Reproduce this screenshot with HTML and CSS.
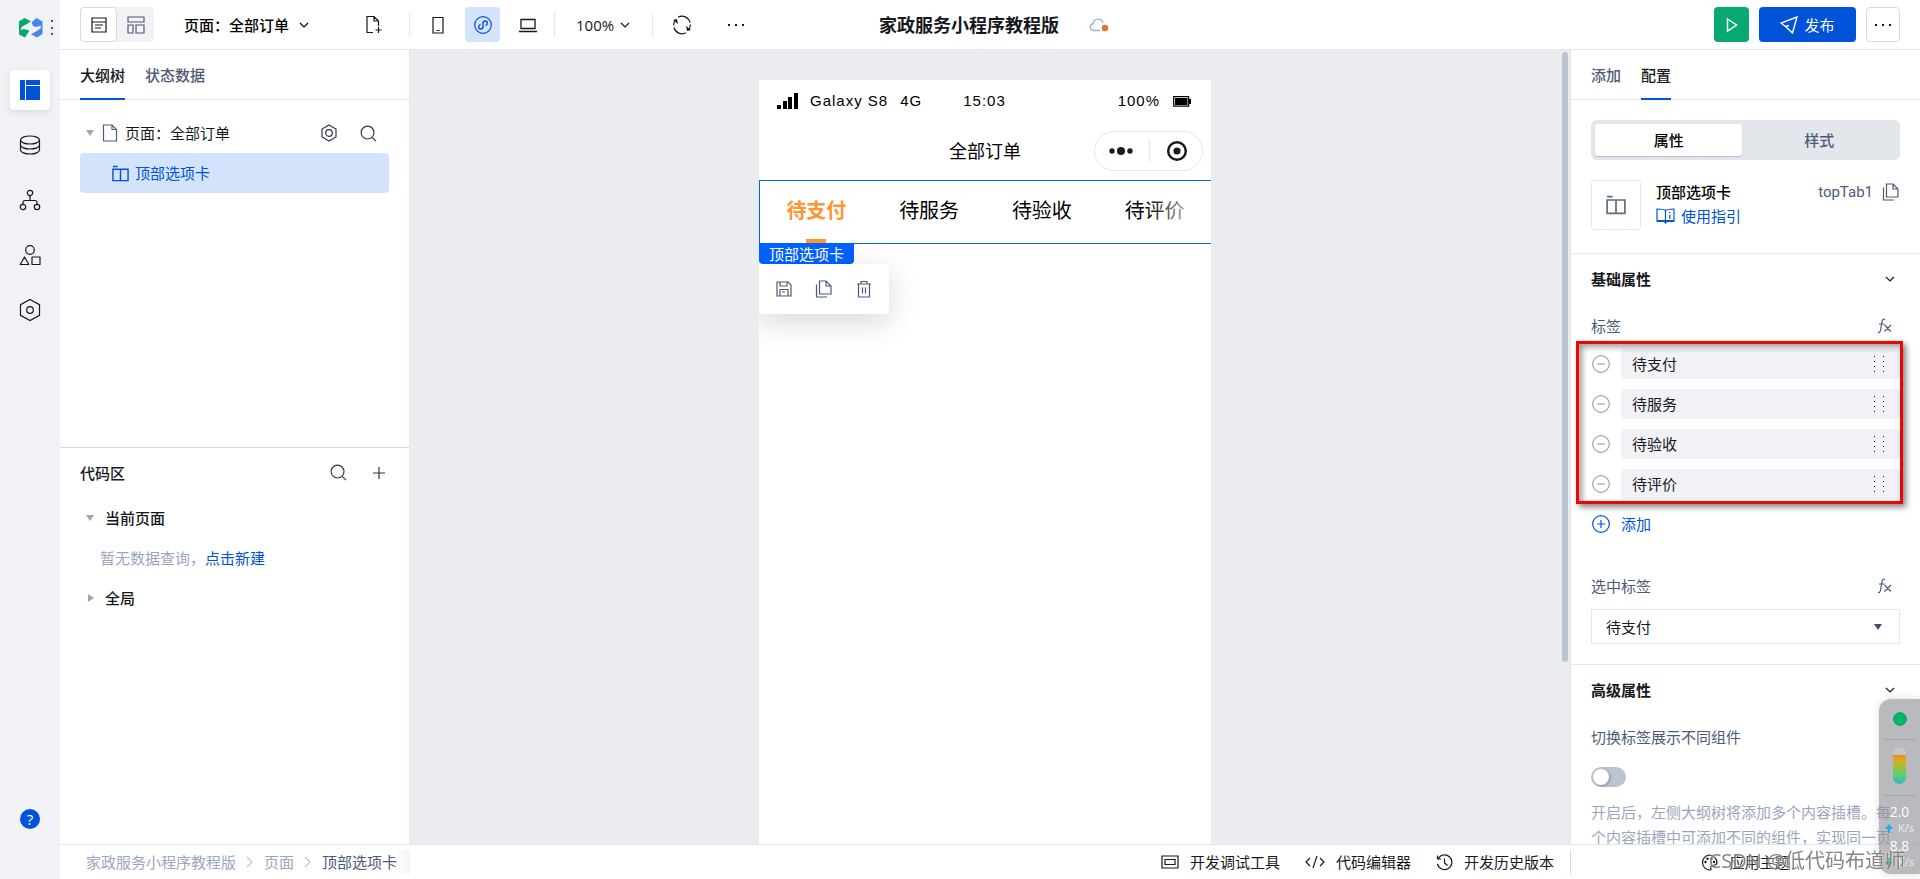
FILE: index.html
```html
<!DOCTYPE html>
<html lang="zh-CN">
<head>
<meta charset="utf-8">
<title>家政服务小程序教程版</title>
<link rel="stylesheet" href="styles.css">
</head>
<body>
<svg class="defs" aria-hidden="true">
  <symbol id="i-chev" viewBox="0 0 10 10"><path d="M1 3l4 4 4-4"/></symbol>
  <symbol id="i-right" viewBox="0 0 8 12"><path d="M1 1l5 5-5 5"/></symbol>
  <symbol id="i-search" viewBox="0 0 18 18"><circle cx="8" cy="8" r="6.8"/><path d="M13 13l4 4"/></symbol>
  <symbol id="i-hex" viewBox="0 0 22 24"><path d="M11 1.500l9.500 5.200v10.600L11 22.500 1.500 17.300V6.700z"/><circle cx="11" cy="12" r="3.300"/></symbol>
  <symbol id="i-hexs" viewBox="0 0 16 18"><path d="M8 1l7 4v8l-7 4-7-4V5z"/><circle cx="8" cy="9" r="3.300"/></symbol>
  <symbol id="i-tab" viewBox="0 0 18 18"><path d="M1 1.500h5M1 4.500h16v12H1zM9 4.500v12" stroke-width="1.500"/></symbol>
  <symbol id="i-copy" viewBox="0 0 18 18"><path d="M4.500 1H11l5 5v8H4.500zM11 1v5h5M1.500 4.500V17H12"/></symbol>
  <symbol id="i-file" viewBox="0 0 16 18"><path d="M1.500 1H10l4.500 4.500V17h-13zM10 1v4.500h4.500"/></symbol>
  <symbol id="i-minus" viewBox="0 0 18 18"><circle cx="9" cy="9" r="8.300"/><path d="M5 9h8"/></symbol>
  <symbol id="i-drag" viewBox="0 0 12 18"><path d="M1 1.500h1M1 6.500h1M1 11.500h1M1 16.500h1M10 1.500h1M10 6.500h1M10 11.500h1M10 16.500h1"/></symbol>
  <symbol id="i-fx" viewBox="0 0 16 16"><path d="M8 1.500C6 .5 5.300 2 5 4L3.500 12c-.4 2-1 3-2.500 2.500M2 6h5.500M7.500 7l6.500 6.500M14 7l-6.500 6.500"/></symbol>
  <symbol id="i-dots" viewBox="0 0 18 4"><path d="M1 1h2v2H1zM8 1h2v2H8zM15 1h2v2h-2z" fill="currentColor" stroke="none"/></symbol>
</svg>

<nav class="rail" aria-label="主导航">
  <div class="brand">
    <svg width="24" height="20" viewBox="0 0 24 20"><path d="M0 3.200L5.500 0l6.500 3.200L8 6 3 8.500 1.500 12 5 11l5.500 1.500L6 19.500 0 16.500z" fill="#07a868" stroke="none"/><path d="M12.500 4.500L17.500 0l6 3.500V16L18 19.500l-6-3.300 4-2.200 5.500-3.500.5-3L17 9l-3-1z" fill="#4a86f0" stroke="none"/></svg>
    <svg width="4" height="18" viewBox="0 0 4 18"><path d="M1 1h2v2H1zM1 8h2v2H1zM1 14h2v2H1z" fill="#4b5b76" stroke="none"/></svg>
  </div>
  <button class="rail-btn active" aria-label="页面"><svg width="20" height="20" viewBox="0 0 20 20"><path d="M0 0h5v20H0zM6 0h14v5H6zM6 6h14v14H6z" fill="#0052d9" stroke="none"/></svg></button>
  <button class="rail-btn" aria-label="数据"><svg width="22" height="20" viewBox="0 0 22 20"><ellipse cx="11" cy="5" rx="9.500" ry="4"/><path d="M1.500 5v10c0 2.200 4.200 4 9.500 4s9.500-1.800 9.500-4V5M1.500 10c0 2.200 4.200 4 9.500 4s9.500-1.800 9.500-4"/></svg></button>
  <button class="rail-btn" aria-label="流程"><svg width="22" height="22" viewBox="0 0 22 22"><circle cx="11" cy="4" r="2.700"/><circle cx="4" cy="18" r="2.700"/><circle cx="18" cy="18" r="2.700"/><path d="M11 7v4.500M4 15v-1.500q0-2 2-2h10q2 0 2 2V15"/></svg></button>
  <button class="rail-btn" aria-label="组件"><svg width="22" height="22" viewBox="0 0 22 22"><circle cx="11" cy="6" r="4.300"/><path d="M5.500 13L9.800 20.500H1.200zM13 13h8v7.500h-8z" stroke-linejoin="round"/></svg></button>
  <button class="rail-btn" aria-label="设置"><svg width="22" height="24"><use href="#i-hex"/></svg></button>
  <button class="rail-btn help" aria-label="帮助"><span class="help-dot">?</span></button>
</nav>

<div class="app">
  <header class="topbar">
    <div class="top-left">
      <div class="mode">
        <button class="mode-btn on" aria-label="单栏"><svg width="16" height="16" viewBox="0 0 16 16"><path d="M1 1h14v14H1zM1 5h14M4 8h8M4 11h6"/></svg></button>
        <button class="mode-btn" aria-label="分栏"><svg width="18" height="18" viewBox="0 0 18 18"><path d="M1 1h16v5H1zM1 9h5v8H1zM9 9h8v8H9z"/></svg></button>
      </div>
      <button class="page-pick"><span>页面：全部订单</span><svg width="10" height="10"><use href="#i-chev"/></svg></button>
      <button class="sq new" aria-label="新建页面"><svg width="18" height="20" viewBox="0 0 18 20"><path d="M8 17.500H2v-16h7l4.500 4.500v5M9 1.500V6h4.500M13.500 12v6M10.500 15h6"/></svg></button>
      <i class="sep"></i>
      <div class="devices">
        <button class="sq" aria-label="手机"><svg width="14" height="18" viewBox="0 0 14 18"><path d="M2 1.500h10v15.500H2zM5.500 14.500h3"/></svg></button>
        <button class="sq on" aria-label="小程序"><svg width="18" height="18" viewBox="0 0 18 18"><circle cx="9" cy="9" r="8.300"/><path d="M6.500 8.300C4 9 4 13 6.800 13 8.500 13 9 12 9 10.800V7.200C9 6 9.800 5 11.200 5c2.800 0 2.800 4 .3 4.700" stroke-width="1.400"/></svg></button>
        <button class="sq" aria-label="电脑"><svg width="18" height="18" viewBox="0 0 18 18"><path d="M2 3.500h14v9H2zM0 15.500h18" stroke-width="1.300"/></svg></button>
      </div>
      <i class="sep"></i>
      <button class="zoom"><span>100%</span><svg width="10" height="10"><use href="#i-chev"/></svg></button>
      <i class="sep"></i>
      <button class="sq refresh" aria-label="刷新"><svg width="20" height="20" viewBox="0 0 20 20"><path d="M6 2.200A8.300 8.300 0 0 1 18 7.500M18.300 9.500a8.300 8.300 0 0 1-1.500 5M14 17.800A8.300 8.300 0 0 1 2 12.500M1.700 10.500a8.300 8.300 0 0 1 1.500-5"/><path d="M1 5l4-1 1 5zM19 15l-4 1-1-5z" fill="currentColor" stroke="none"/></svg></button>
      <button class="sq" aria-label="更多"><svg width="18" height="4"><use href="#i-dots"/></svg></button>
    </div>
    <div class="app-name">
      <h1>家政服务小程序教程版</h1>
      <svg class="cloud" width="20" height="16" viewBox="0 0 20 16"><path d="M11 13.500H4.500C.5 13 0 7.500 4 6.700 5 1 12.500.5 14 5.800"/><circle cx="16" cy="11" r="3.200" fill="#ed6c2c" stroke="none"/></svg>
    </div>
    <div class="top-right">
      <button class="run" aria-label="运行"><svg width="12" height="16" viewBox="0 0 12 16"><path d="M1.500 2l9 6-9 6z" stroke-width="1.500"/></svg></button>
      <button class="publish"><svg width="18" height="18" viewBox="0 0 18 18"><path d="M17 1L1 7l4.500 3.500L12.500 17zM5.500 10.500L9 9.500" stroke-width="1.400"/></svg><span>发布</span></button>
      <button class="more" aria-label="更多"><svg width="18" height="4"><use href="#i-dots"/></svg></button>
    </div>
  </header>

  <div class="work">
    <aside class="left">
      <section class="half">
        <div class="tabs"><button class="tab on">大纲树</button><button class="tab">状态数据</button></div>
        <div class="tree">
          <div class="node">
            <i class="caret"></i><svg class="slate" width="16" height="18"><use href="#i-file"/></svg><span class="grow">页面：全部订单</span>
            <button class="bare" aria-label="设置"><svg width="16" height="18"><use href="#i-hexs"/></svg></button>
            <button class="bare" aria-label="搜索"><svg width="17" height="17"><use href="#i-search"/></svg></button>
          </div>
          <div class="node child"><svg width="17" height="17"><use href="#i-tab"/></svg><span>顶部选项卡</span></div>
        </div>
      </section>
      <section class="half code">
        <div class="code-head"><h2>代码区</h2>
          <button class="bare" aria-label="搜索"><svg width="17" height="17"><use href="#i-search"/></svg></button>
          <button class="bare" aria-label="新增"><svg width="12" height="12" viewBox="0 0 12 12"><path d="M6 0v12M0 6h12"/></svg></button>
        </div>
        <div class="group"><i class="caret"></i><b>当前页面</b></div>
        <p class="empty">暂无数据查询，<a href="#">点击新建</a></p>
        <div class="group"><i class="caret side"></i><b>全局</b></div>
      </section>
    </aside>

    <main class="canvas">
      <div class="phone">
        <div class="status">
          <svg width="22" height="16" viewBox="0 0 22 16"><path d="M0 12h4v4H0zM6 8h4v8H6zM11 4h4v12h-4zM17 0h4v16h-4z" fill="#000" stroke="none"/></svg>
          <span class="carrier">Galaxy S8</span><span class="net">4G</span><span class="clock">15:03</span><span>100%</span>
          <svg class="battery" width="18" height="11" viewBox="0 0 18 11"><path d="M.7.7h15v9.500H.7z"/><path d="M2 2h12.500v7H2zM16 3h2v5h-2z" fill="#000" stroke="none"/></svg>
        </div>
        <div class="navbar">
          <span class="nav-title">全部订单</span>
          <div class="capsule">
            <svg width="24" height="10" viewBox="0 0 24 10"><g fill="#1b1b1b" stroke="none"><circle cx="3" cy="5" r="2.700"/><circle cx="12" cy="5" r="4"/><circle cx="21" cy="5" r="2.700"/></g></svg>
            <i></i>
            <svg width="22" height="22" viewBox="0 0 22 22"><circle cx="11" cy="11" r="8.800" stroke-width="2.500"/><circle cx="11" cy="11" r="3.600" fill="#1b1b1b" stroke="none"/></svg>
          </div>
        </div>
        <div class="top-tabs">
          <div class="ttab on">待支付</div><div class="ttab">待服务</div><div class="ttab">待验收</div><div class="ttab">待评价</div>
        </div>
        <div class="sel-tag">顶部选项卡</div>
        <div class="sel-tools">
          <button aria-label="保存"><svg width="16" height="16" viewBox="0 0 16 16"><path d="M1 1h11l3 3v11H1zM4 1v4h7V1M4 15V8.500h8V15M6 11h3"/></svg></button>
          <button aria-label="复制"><svg width="18" height="18"><use href="#i-copy"/></svg></button>
          <button aria-label="删除"><svg width="16" height="18" viewBox="0 0 16 18"><path d="M1 4h14M5 4V1.500h6V4M2.500 4v13h11V4M6.500 7.500v6M9.500 7.500v6"/></svg></button>
        </div>
      </div>
      <div class="scroll"><i></i></div>
    </main>

    <aside class="right">
      <div class="tabs"><button class="tab">添加</button><button class="tab on">配置</button></div>
      <div class="intro">
        <div class="segment"><button class="on">属性</button><button>样式</button></div>
        <div class="comp">
          <div class="comp-icon"><svg width="20" height="20"><use href="#i-tab"/></svg></div>
          <div class="comp-text"><b>顶部选项卡</b>
            <a href="#"><svg width="19" height="16" viewBox="0 0 19 16"><path d="M9.500 2.500C8 1 6 1 1 1v12h8.500M9.500 2.500C11 1 13 1 18 1v12H9.500zM13.800 4v1.500M13.800 7v4"/><path d="M1 12h17v2h-7l-1.500 2L8 14H1z" fill="currentColor" stroke="none"/></svg>使用指引</a></div>
          <div class="comp-id">topTab1 <button class="bare" aria-label="复制"><svg width="18" height="18"><use href="#i-copy"/></svg></button></div>
        </div>
      </div>
      <section class="sec">
        <h3>基础属性<svg width="10" height="10"><use href="#i-chev"/></svg></h3>
        <div class="field"><span>标签</span><svg width="16" height="16"><use href="#i-fx"/></svg></div>
        <ul class="items">
          <li><button class="bare" aria-label="移除"><svg width="18" height="18"><use href="#i-minus"/></svg></button><div class="pill">待支付<svg width="12" height="18"><use href="#i-drag"/></svg></div></li>
          <li><button class="bare" aria-label="移除"><svg width="18" height="18"><use href="#i-minus"/></svg></button><div class="pill">待服务<svg width="12" height="18"><use href="#i-drag"/></svg></div></li>
          <li><button class="bare" aria-label="移除"><svg width="18" height="18"><use href="#i-minus"/></svg></button><div class="pill">待验收<svg width="12" height="18"><use href="#i-drag"/></svg></div></li>
          <li><button class="bare" aria-label="移除"><svg width="18" height="18"><use href="#i-minus"/></svg></button><div class="pill">待评价<svg width="12" height="18"><use href="#i-drag"/></svg></div></li>
        </ul>
        <button class="add"><svg width="18" height="18" viewBox="0 0 18 18"><circle cx="9" cy="9" r="8.300"/><path d="M5 9h8M9 5v8"/></svg>添加</button>
        <div class="field"><label for="sel">选中标签</label><svg width="16" height="16"><use href="#i-fx"/></svg></div>
        <div class="select"><select id="sel"><option>待支付</option><option>待服务</option><option>待验收</option><option>待评价</option></select><i class="caret dark"></i></div>
      </section>
      <section class="sec">
        <h3>高级属性<svg width="10" height="10"><use href="#i-chev"/></svg></h3>
        <div class="field"><label for="sw">切换标签展示不同组件</label></div>
        <input class="switch" type="checkbox" id="sw">
        <p class="tip">开启后，左侧大纲树将添加多个内容插槽。每个内容插槽中可添加不同的组件，实现同一页</p>
      </section>
    </aside>
  </div>

  <footer class="bottom">
    <nav class="crumbs" aria-label="路径"><a href="#">家政服务小程序教程版</a><svg width="8" height="12"><use href="#i-right"/></svg><a href="#">页面</a><svg width="8" height="12"><use href="#i-right"/></svg><span class="here">顶部选项卡</span></nav>
    <div class="dev">
      <button><svg width="18" height="14" viewBox="0 0 18 14"><path d="M1 1h16v12H1zM4 4.500h10v5H4z"/></svg>开发调试工具</button>
      <button><svg width="20" height="14" viewBox="0 0 20 14"><path d="M5 3L1 7l4 4M15 3l4 4-4 4M12 1L8 13"/></svg>代码编辑器</button>
      <button><svg width="17" height="17" viewBox="0 0 17 17"><path d="M2 5a7.300 7.300 0 1 1-.5 5M1.500 1.500V5H5M8.500 4.500V9l3 2.500"/></svg>开发历史版本</button>
    </div>
    <div class="theme"><button><svg width="17" height="17" viewBox="0 0 17 17"><path d="M8.500 1a7.500 7.500 0 1 0 1 15c1.500-.5-.5-2 .5-3.500S16 12 16 8.500 12.500 1 8.500 1z"/><g fill="currentColor" stroke="none"><circle cx="4.500" cy="8" r="1.200"/><circle cx="6.500" cy="4.700" r="1.200"/><circle cx="10.500" cy="4.700" r="1.200"/><circle cx="13" cy="8" r="1.200"/></g></svg>应用主题</button></div>
  </footer>
</div>

<div class="meter">
  <i class="meter-dot"></i>
  <div class="meter-bar"><i></i></div>
  <div class="rate"><b>2.0</b><span><svg width="8" height="9" viewBox="0 0 8 9"><path d="M4 0l4 5H5v4H3V5H0z" fill="#19a9ff" stroke="none"/></svg>K/s</span></div>
  <div class="rate"><b>8.8</b><span><svg width="8" height="9" viewBox="0 0 8 9"><path d="M4 9l4-5H5V0H3v4H0z" fill="#0cae5c" stroke="none"/></svg>K/s</span></div>
</div>
<div class="mark">CSDN @低代码布道师</div>
</body>
</html>
```

FILE: styles.css
```css
* { box-sizing: border-box; }
body {
  margin: 0;
  display: flex;
  height: 100vh;
  overflow: hidden;
  background: #fff;
  color: #16181d;
  font: 15px/24px "Open Sans", "Noto Sans CJK SC", sans-serif;
}
h1, h2, h3, p, ul { margin: 0; padding: 0; }
button, select { font: inherit; color: inherit; background: none; border: 0; padding: 0; margin: 0; }
button { display: flex; align-items: center; justify-content: center; }
a { color: #0052d9; text-decoration: none; }
svg { display: block; flex: none; fill: none; stroke: currentColor; stroke-width: 1.2; }
i { flex: none; }
.defs { position: absolute; width: 0; height: 0; }
.grow { flex: 1; }

.rail {
  flex: none;
  width: 60px;
  display: flex;
  flex-direction: column;
  align-items: center;
  gap: 15px;
  padding-bottom: 40px;
  background: #f0f2f6;
}
.brand { display: flex; align-items: center; gap: 7px; align-self: stretch; height: 55px; padding-left: 19px; }
.rail-btn { width: 40px; height: 40px; border-radius: 4px; }
.rail-btn.active { background: #fff; box-shadow: 0 2px 6px rgba(0, 0, 0, .1); }
.help { margin-top: auto; }
.help-dot { width: 20px; height: 20px; border-radius: 50%; background: #0052d9; color: #fff; line-height: 20px; }

.app { flex: 1; min-width: 0; display: flex; flex-direction: column; }
.topbar {
  flex: none;
  display: grid;
  grid-template-columns: 1fr auto 1fr;
  align-items: center;
  height: 50px;
  padding: 0 20px;
  border-bottom: 1px solid #e3e6eb;
}
.top-left, .top-right, .devices, .app-name { display: flex; align-items: center; }
.mode { display: flex; background: #f0f2f6; border-radius: 4px; }
.mode-btn { width: 37px; height: 35px; color: #4b5b76; }
.mode-btn.on { background: #fff; border: 1px solid #d4d9e3; border-radius: 4px; color: #16181d; }
.page-pick { gap: 10px; margin-left: 30px; font-weight: 500; color: #000; }
.sq { width: 35px; height: 35px; border-radius: 4px; }
.sq.on { background: #d4e3fc; color: #0052d9; }
.new { margin: 0 18px 0 47px; }
.sep { width: 1px; height: 24px; background: #e3e6eb; }
.devices { gap: 10px; margin: 0 9px 0 10px; }
.zoom { gap: 6px; margin: 0 22px 0 21px; }
.refresh { margin: 0 19px 0 11px; }
.app-name { gap: 30px; padding-left: 8px; }
h1 { font-size: 18px; font-weight: 700; }
.cloud { color: #a6b0c2; stroke-width: 1.4; }
.top-right { justify-content: flex-end; gap: 10px; }
.run { width: 35px; height: 35px; border-radius: 4px; background: #07a872; color: #fff; }
.publish { width: 97px; height: 35px; gap: 6px; border-radius: 4px; background: #0052d9; color: #fff; }
.more { width: 34px; height: 35px; border: 1px solid #d4d9e3; border-radius: 4px; }

.work { flex: 1; min-height: 0; display: grid; grid-template-columns: 350px 1fr 350px; }
.left { display: flex; flex-direction: column; border-right: 1px solid #e3e6eb; }
.half { flex: 1; min-height: 0; }
.tabs { display: flex; gap: 20px; height: 50px; padding: 0 20px; border-bottom: 1px solid #e3e6eb; }
.tab { height: 50px; border-top: 2px solid transparent; border-bottom: 2px solid transparent; color: #4b5b76; font-weight: 500; }
.tab.on { border-bottom-color: #0052d9; color: #16181d; }
.tree { padding: 13px 20px 0; }
.node { display: flex; align-items: center; height: 40px; border-radius: 4px; padding: 0 12px 0 6px; }
.node .caret { margin-right: 8px; }
.node .slate { margin-right: 7px; }
.node .bare + .bare { margin-left: 23px; }
.slate { color: #4b5b76; }
.node.child { gap: 6px; padding-left: 32px; background: #d4e3fc; color: #0052d9; }
.caret { border: 4px solid transparent; border-top: 6px solid #9aa6bd; border-bottom: 0; }
.caret.side { border: 4px solid transparent; border-left: 6px solid #9aa6bd; border-right: 0; margin: 0 0 0 2px; }
.caret.dark { border-top-color: #3d5068; }
.bare { color: #303540; }
.code { border-top: 1px solid #d4d8de; }
.code-head { display: flex; align-items: center; height: 50px; padding: 0 24px 0 20px; }
.code-head h2 { flex: 1; font-size: 15px; font-weight: 500; }
.code-head .bare + .bare { margin-left: 26px; }
.group { display: flex; align-items: center; gap: 11px; height: 40px; padding-left: 26px; }
b { font-weight: 500; }
.empty { padding-left: 40px; line-height: 40px; color: #9aa6bd; }

.canvas { display: flex; min-width: 0; background: #eaecf0; padding-top: 2px; }
.phone { flex: none; width: 452px; margin: 28px auto 0; background: #fff; color: #000; overflow: hidden; }
.status { display: flex; align-items: center; height: 42px; padding: 0 20px 0 18px; font-family: "Liberation Sans", sans-serif; letter-spacing: 1px; }
.status .carrier { margin-left: 11px; }
.net { margin-left: 12px; }
.clock { flex: 1; padding-left: 41px; }
.battery { margin-left: 13px; }
.navbar { display: grid; grid-template-columns: 1fr auto 1fr; align-items: center; height: 58px; padding: 0 8px; }
.nav-title { grid-column: 2; font-size: 18px; }
.capsule { justify-self: end; display: flex; align-items: center; justify-content: space-between; width: 109px; height: 40px; padding: 0 14px; border: 1px solid #e6e6ea; border-radius: 20px; color: #1b1b1b; }
.capsule i { width: 1px; height: 22px; background: #e6e6ea; }
.top-tabs { position: relative; display: grid; grid-template-columns: repeat(4, 1fr); height: 64px; font-size: 20px; border: 1px solid #0062ff; border-right: 0; }
.top-tabs::after { content: ""; position: absolute; inset: 0 0 0 auto; width: 66px; background: linear-gradient(90deg, rgba(255, 255, 255, 0), #fff); }
.ttab { display: grid; grid-template-rows: 1fr 4px; justify-items: center; align-items: center; padding-top: 2px; }
.ttab.on { color: #ff9533; font-weight: 700; }
.ttab.on::after { content: ""; width: 20px; height: 4px; background: #ff9533; }
.sel-tag { width: max-content; padding: 0 10px; border-radius: 0 0 4px 4px; background: #0062ff; color: #fff; line-height: 20px; }
.sel-tools { display: flex; width: max-content; padding: 5px; border-radius: 4px; background: #fff; color: #4b5b76; box-shadow: 0 8px 30px rgba(0, 0, 0, .16); }
.sel-tools button { width: 40px; height: 40px; }
.scroll { flex: none; width: 10px; }
.scroll i { display: block; width: 6px; height: 77%; margin-left: 2px; border-radius: 3px; background: #bbc4d0; }

.right { min-width: 0; overflow: hidden; border-left: 1px solid #e3e6eb; background: #fff; }
.intro { padding: 20px 20px 23px; }
.segment { display: flex; padding: 4px; border-radius: 6px; background: #e3e6eb; }
.segment button { flex: 1; height: 32px; border-radius: 3px; color: #4b5b76; font-weight: 500; }
.segment .on { flex: 0 0 49%; background: #fff; color: #000; box-shadow: 0 1px 1px #b4bcc8; }
.comp { display: flex; margin-top: 20px; }
.comp-icon { display: grid; place-items: center; width: 50px; height: 50px; margin-right: 15px; border: 1px solid #e3e6eb; border-radius: 4px; color: #5d6b84; }
.comp-text { flex: 1; }
.comp-text b { display: block; color: #000; }
.comp-text a { display: flex; align-items: center; gap: 6px; }
.comp-id { display: flex; align-items: center; gap: 9px; height: 24px; color: #4b5b76; font-family: Roboto, sans-serif; }
.comp-id .bare { color: #4b5b76; }
.sec { border-top: 1px solid #e3e6eb; padding: 0 20px 20px; }
h3 { display: flex; align-items: center; justify-content: space-between; height: 50px; padding-right: 5px; font-size: 15px; font-weight: 700; }
.field { display: flex; align-items: center; justify-content: space-between; height: 30px; margin: 7px 0 8px; padding-right: 7px; color: #4b5b76; }
.items { position: relative; display: grid; gap: 10px; list-style: none; }
.items::after {
  content: "";
  position: absolute;
  inset: -8px -3px -5px -15px;
  border: 3px solid #f00505;
  box-shadow: 3px 3px 6px rgba(0, 0, 0, .5), inset 3px 3px 6px rgba(0, 0, 0, .4);
}
.items li { display: flex; align-items: center; gap: 11px; padding-left: 1px; }
.items .bare { color: #9aa6bd; }
.pill { flex: 1; display: flex; align-items: center; justify-content: space-between; height: 30px; padding: 0 15px 0 11px; border-radius: 4px; background: #f0f2f6; }
.add { gap: 11px; height: 30px; margin: 10px 0 32px; padding-left: 1px; color: #0052d9; }
.add + .field { margin-top: 0; }
.select { display: flex; align-items: center; height: 35px; border: 1px solid #e3e6eb; padding-right: 17px; }
.select select { flex: 1; height: 33px; padding-left: 14px; appearance: none; outline: 0; }
.switch { appearance: none; display: block; width: 35px; height: 20px; margin: 15px 0 13px; border-radius: 10px; background: #bbc4d0; }
.switch::before { content: ""; display: block; width: 16px; height: 16px; margin: 2px; border-radius: 50%; background: #fff; box-shadow: 1px 1px 3px rgba(0, 0, 0, .3); }
.tip { line-height: 25px; color: #9aa6bd; }

.bottom { flex: none; display: grid; grid-template-columns: 350px 1fr 350px; align-items: center; height: 35px; border-top: 1px solid #e3e6eb; }
.crumbs { display: flex; align-items: center; gap: 10px; padding-left: 26px; color: #bbc4d0; }
.crumbs a { color: #9aa6bd; }
.here { flex: 1; color: #4b5b76; background: linear-gradient(90deg, #fff 80%, #f4f5f7); }
.dev { display: flex; justify-content: flex-end; gap: 25px; padding-right: 16px; }
.dev button, .theme button { gap: 11px; }
.theme { display: flex; justify-content: center; border-left: 1px solid #d4d9e3; }

.meter {
  position: fixed;
  right: 0;
  bottom: 5px;
  width: 41px;
  padding: 13px 4px 4px;
  border-radius: 12px 0 0 12px;
  background: rgba(146, 147, 154, .64);
  box-shadow: 0 0 8px rgba(0, 0, 0, .15);
  color: #fff;
  display: flex;
  flex-direction: column;
  align-items: center;
}
.meter-dot { width: 14px; height: 14px; border-radius: 50%; background: #00b862; border: 1px solid #2696a8; }
.meter-bar { align-self: stretch; margin: 13px 0 6px; padding: 7px 0 11px; border: solid #a4a8ae; border-width: 1px 0; }
.meter-bar i { display: block; width: 13px; height: 37px; margin: 0 auto; border-radius: 7px; background: linear-gradient(#c5c6ca 8px, #f08c28 8px, #d2b41e 40%, #5ccf70 75%, #2fb8b8); }
.rate { height: 34px; font-size: 14px; line-height: 20px; text-align: center; }
.rate b { display: block; font-weight: 400; line-height: 20px; }
.rate span { display: flex; align-items: center; gap: 5px; font-size: 11px; line-height: 12px; color: #eee; }
.mark { position: fixed; right: 15px; bottom: 4px; font-size: 20px; line-height: 28px; color: rgba(110, 110, 116, .85); text-shadow: 0 0 2px #fff; }
```
